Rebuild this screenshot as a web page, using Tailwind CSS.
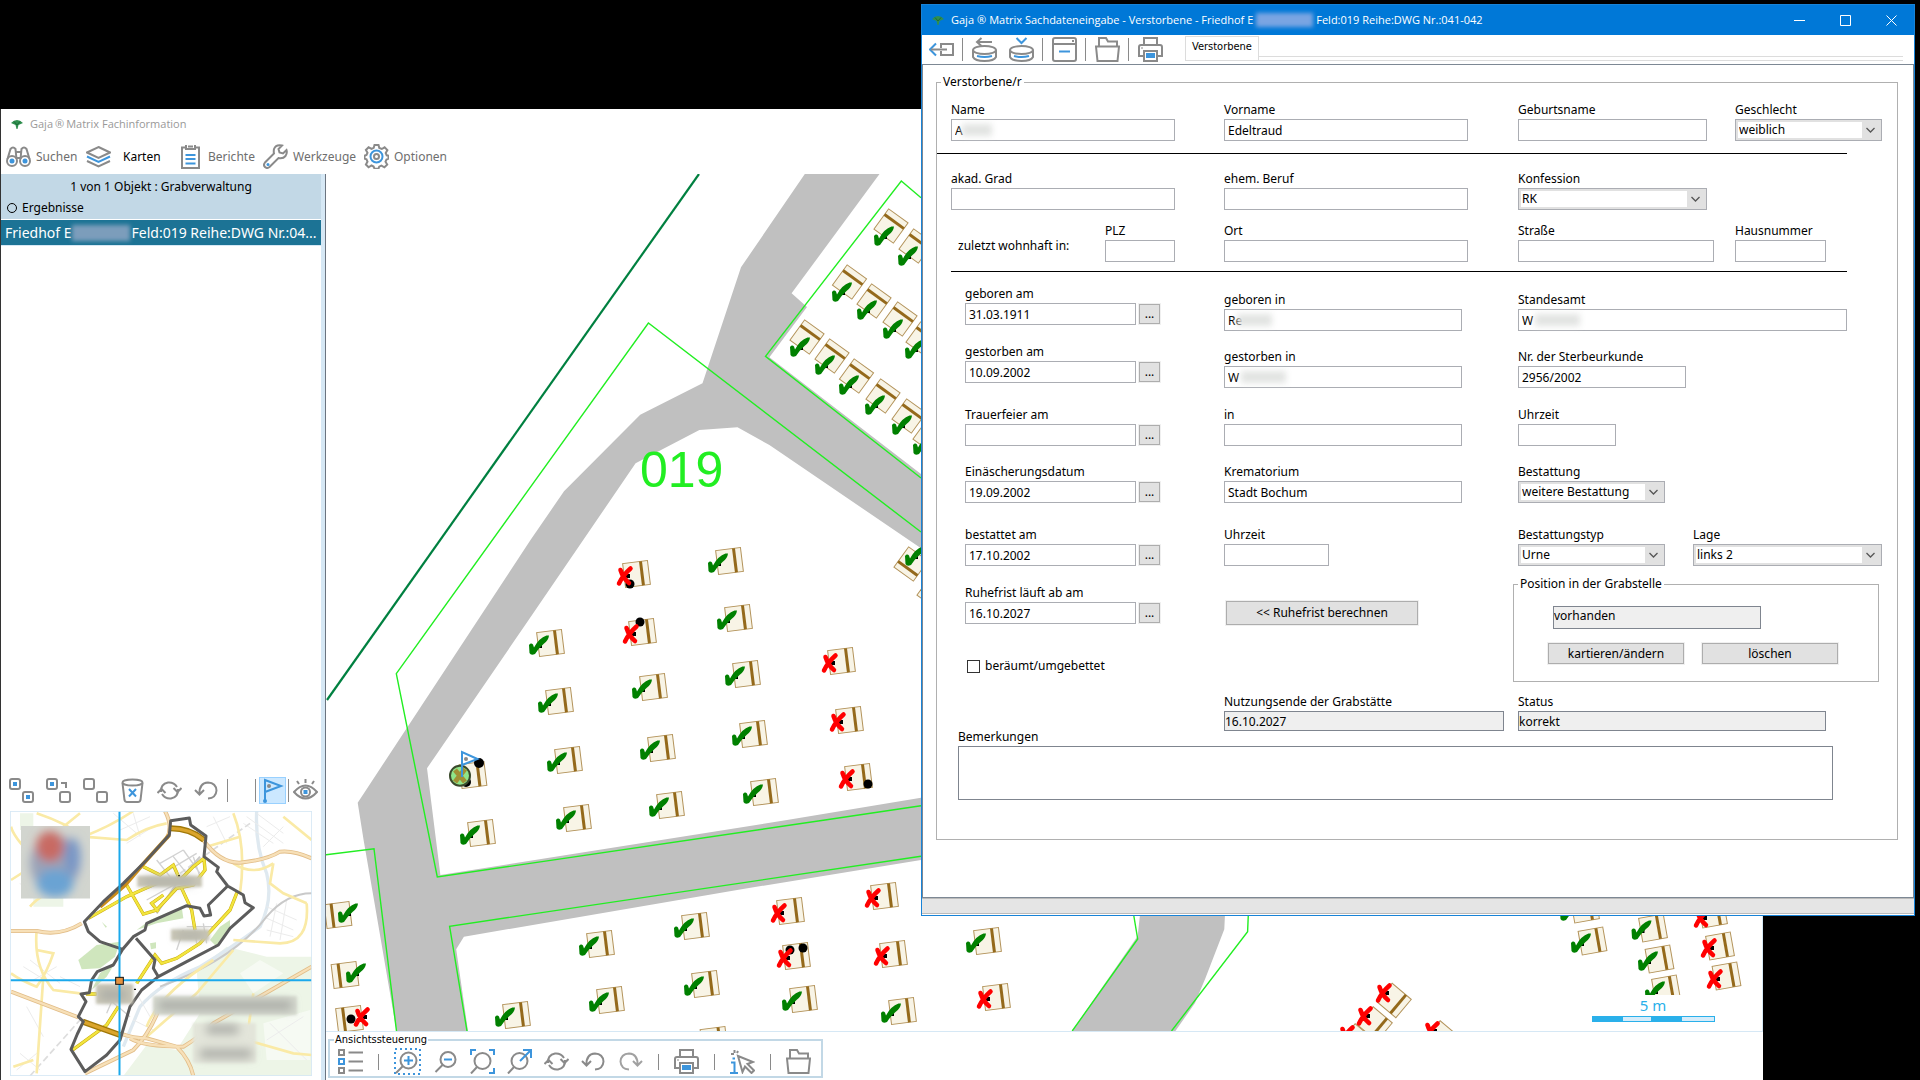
<!DOCTYPE html>
<html lang="de">
<head>
    <meta charset="UTF-8">
    <meta name="viewport" content="width=device-width, initial-scale=1.0">
    <title>Gaja®Matrix Fachinformation</title>
    <script src="https://cdn.jsdelivr.net/npm/@tailwindcss/browser@4"></script>
    <style>
        body {
            font-family: 'Noto Sans', 'Open Sans', sans-serif;
        }
        .i {
            fill: none;
            stroke: #8a8a8a;
            stroke-width: 2;
        }
        .b {
            stroke: #3d95dc;
        }
    </style>
</head>
<body class="bg-black text-black text-xs">

    <!-- Icons -->
    <svg class="hidden">
        <symbol id="logo" viewBox="0 0 12 9"><path d="M0 3 Q6 -3 12 3 L7.500 5 L6.500 9 L5.500 9 L4.500 5 Z" fill="#2f8f4e"/><path d="M3 1.500 L6 5 L9 1.500" stroke="#1d6b3a" fill="none"/></symbol>
        <symbol id="binoculars" viewBox="0 0 25 25"><g class="i"><circle cx="6" cy="17" r="5"/><circle cx="19" cy="17" r="5"/><path d="M1.500 15 L4.500 5 Q7 2 9.500 5 L10.500 15 M23.500 15 L20.500 5 Q18 2 15.500 5 L14.500 15 M10 8 h5 M10.500 14 h4"/></g><circle cx="6" cy="17" r="2.500" fill="#3d95dc"/><circle cx="19" cy="17" r="2.500" fill="#3d95dc"/></symbol>
        <symbol id="layers" viewBox="0 0 25 25"><g class="i"><path d="M12.500 3 L24 8.500 L12.500 14 L1 8.500 Z"/><path class="b" d="M1 12.500 L12.500 18 L24 12.500"/><path d="M1 17 L12.500 22.500 L24 17"/></g></symbol>
        <symbol id="clipboard" viewBox="0 0 25 25"><g class="i"><path d="M7 3.500 H4 V24 H21 V3.500 H18 M8 1 V6 M17 1 V6 M8 5 H17 M10 2.500 H15"/><path class="b" d="M7.500 11 h10 M7.500 15 h10 M7.500 19.500 h10"/></g></symbol>
        <symbol id="wrench" viewBox="0 0 25 25"><path class="i" d="M19 1.500 Q13 0 11 5 Q10.500 7.500 11 9.500 L2 18.500 Q0 21 2 23 Q4 25 6.500 23 L15.500 14 Q20 15 22.500 12 Q24.500 9 23.500 6 L20 9.500 L16.500 8.500 L15.500 5 Z"/><circle cx="5" cy="20.500" r="1.500" fill="#3d95dc"/></symbol>
        <symbol id="gear" viewBox="0 0 25 25"><g class="i"><path d="M10.500 1 h4 l.8 3 2.500 1 2.800-1.700 2.800 2.800L21.700 9l1 2.300 1.800.4v3l-2 .8-1 2.200 1.700 2.900-2.800 2.700-3-1.600-2.200 1-.7 2h-4l-.9-2.200-2.100-1-2.900 1.800-2.700-2.800 1.600-2.900-1-2.200-2-.7v-3l2-.7 1-2.200-1.600-2.800 2.700-2.700 3 1.600 2.100-1z"/><circle class="b" cx="12.500" cy="12.500" r="6"/><circle cx="12.500" cy="12.500" r="2.500"/></g></symbol>
        <symbol id="sel-both" viewBox="0 0 25 25"><g class="i"><rect x="1" y="1" width="10" height="10" rx="2"/><rect x="14" y="14" width="10" height="10" rx="2"/></g><path d="M4 4h4v4h-4z M17 17h4v4h-4z" fill="#3d95dc"/></symbol>
        <symbol id="sel-swap" viewBox="0 0 25 25"><g class="i"><rect x="1" y="1" width="10" height="10" rx="2"/><rect x="14" y="14" width="10" height="10" rx="2"/><path d="M15 5 h5 v5"/></g><path d="M4 4h4v4h-4z" fill="#3d95dc"/></symbol>
        <symbol id="sel-none" viewBox="0 0 25 25"><g class="i"><rect x="1" y="1" width="10" height="10" rx="2"/><rect x="14" y="14" width="10" height="10" rx="2"/></g></symbol>
        <symbol id="trash" viewBox="0 0 25 25"><g class="i"><ellipse cx="12.500" cy="4.500" rx="10" ry="3"/><path d="M2.500 5 L4.500 22 Q5 24 7 24 H18 Q20 24 20.500 22 L22.500 5"/><path class="b" d="M9 11 L16 18.500 M16 11 L9 18.500"/></g></symbol>
        <symbol id="refresh" viewBox="0 0 25 25"><g class="i"><path d="M4 14 Q3.500 6 11 4.500 Q17 4 20 9 M21 11 Q21.500 19 14 20.500 Q8 21 5 16"/><path d="M.5 15 L4.500 11 L8.500 15 M16.500 10 L20.500 14 L24.500 10"/></g></symbol>
        <symbol id="undo" viewBox="0 0 25 25"><path class="i" d="M5.500 16 Q5 5 14 4.500 Q22 5 22.500 12.500 Q22 20 14 20.500 M1 12 L5.500 16.500 L10 12"/></symbol>
        <symbol id="redo" viewBox="0 0 25 25"><path class="i" d="M19.500 16 Q20 5 11 4.500 Q3 5 2.500 12.500 Q3 20 11 20.500 M24 12 L19.500 16.500 L15 12"/></symbol>
        <symbol id="flag" viewBox="0 0 25 25"><g class="i"><path class="b" d="M5 24 V2 L21 8 L5 14"/></g><circle cx="5" cy="23" r="2" fill="#3d95dc"/><circle cx="9" cy="8" r="2" fill="#8a8a8a"/></symbol>
        <symbol id="eye" viewBox="0 0 25 25"><g class="i"><path d="M1 14 Q12.500 1 24 14 Q12.500 27 1 14 Z"/><circle cx="12.500" cy="14" r="4.500"/><path d="M12.500 1 v4 M4 3 l2 3 M21 3 l-2 3"/></g><rect x="10.500" y="12" width="4" height="4" fill="#3d95dc"/></symbol>
        <symbol id="list" viewBox="0 0 25 25"><g class="i"><rect x="1" y="1" width="5" height="5"/><rect class="b" x="1" y="10" width="5" height="5"/><rect x="1" y="19" width="5" height="5"/><path d="M10.500 3.500 H25 M10.500 12.500 H25 M10.500 21.500 H25"/></g></symbol>
        <symbol id="zoom-in" viewBox="0 0 27 27"><g class="i"><path class="b" stroke-dasharray="2 3" d="M1 1 H26 V26 H1 Z"/><circle cx="14.500" cy="12.500" r="8"/><path d="M9 18 L2 25"/><path class="b" d="M10 12.500 h9 M14.500 8 v9"/></g></symbol>
        <symbol id="zoom-out" viewBox="0 0 25 25"><g class="i"><circle cx="15" cy="10.500" r="7.500"/><path d="M9.500 16 L2.500 23"/><path class="b" d="M11 10.500 h8"/></g></symbol>
        <symbol id="zoom-fit" viewBox="0 0 25 25"><g class="i"><circle cx="12.500" cy="12" r="8"/><path d="M7 18 L1 24.500"/><path class="b" d="M1 6 V1 H6 M19 1 H24 V6 M24 19 V24 H19"/></g></symbol>
        <symbol id="zoom-to" viewBox="0 0 25 25"><g class="i"><circle cx="12.500" cy="12" r="8"/><path d="M7 18 L1 24.500"/><path class="b" d="M13 12 L23.500 1.500 M16 1 H24 V9"/></g></symbol>
        <symbol id="printer" viewBox="0 0 25 25"><g class="i"><path d="M6 8 V1 H19 V8 M5 19 H1 V10 Q1 8 3 8 H22 Q24 8 24 10 V19 H20"/><path d="M6 14 H19 V24 H6 Z"/></g><path d="M8 16h9v5h-9z" fill="#3d95dc"/><path d="M3 10.500h2v1h-2z" fill="#8a8a8a"/></symbol>
        <symbol id="info-cursor" viewBox="0 0 25 25"><g class="i"><path d="M8 7 L23 13 L17.500 15 L24 21.500 L21.500 24 L15 17.500 L12.500 23 Z"/><path d="M4.500 1 v3 M1 5 h3 M8 2 L7 4"/><path class="b" d="M1 13.500 h3.500 V24 M0 24 h8 M2.500 9.500 h2.500"/></g></symbol>
        <symbol id="folder" viewBox="0 0 25 25"><g class="i"><path d="M4 9 V1 H11 L13 4.500 H22 V9"/><path d="M1 9.500 H24 L22.500 24 H2.500 Z"/></g></symbol>
        <symbol id="exit" viewBox="0 0 25 25"><g class="i"><path class="b" d="M7 6.500 L1 12.500 L7 18.500"/><path d="M2 12.500 H18 M12 11 V7 H24 V18 H12 V14"/></g></symbol>
        <symbol id="db-back" viewBox="0 0 25 25"><g class="i"><ellipse cx="12.500" cy="13" rx="11.500" ry="4"/><path d="M1 13 V20 Q3 24 12.500 24 Q22 24 24 20 V13 M5 5 H20 M9.500 1 L5 5 L9.500 9"/><path class="b" d="M5 19 Q12.500 21 20 19"/></g></symbol>
        <symbol id="db-down" viewBox="0 0 25 25"><g class="i"><ellipse cx="12.500" cy="13" rx="11.500" ry="4"/><path d="M1 13 V20 Q3 24 12.500 24 Q22 24 24 20 V13"/><path class="b" d="M5 19 Q12.500 21 20 19 M7.500 1 L12.500 6 L17.500 1"/></g></symbol>
        <symbol id="window" viewBox="0 0 25 25"><g class="i"><rect x="1" y="1" width="23" height="23" rx="2"/><path d="M1 7 H24"/><path class="b" d="M7 14.500 h11"/></g><path d="M20 3h2v2h-2z" fill="#8a8a8a"/></symbol>
        <symbol id="chevron" viewBox="0 0 10 10"><path d="M1 3 L5 7 L9 3" fill="none" stroke="#555" stroke-width="1.300"/></symbol>
    </svg>

    <!-- Hauptfenster -->
    <div class="absolute left-0 right-[157px] top-[109px] bottom-0 flex flex-col bg-white border-l border-[#333] overflow-hidden">
        <header class="flex items-center h-[30px] pl-[10px] gap-[7px] text-[11px] text-[#999]" style="font-family: 'Open Sans', sans-serif">
            <svg class="w-3 h-[9px]"><use href="#logo"/></svg>
            <h1>Gaja<span class="mx-0.5">®</span>Matrix Fachinformation</h1>
        </header>
        <nav class="flex items-center h-[35px] pl-[5px] text-[#6e6e6e]">
            <button class="flex items-center gap-[5px] w-20"><svg class="size-[25px]"><use href="#binoculars"/></svg>Suchen</button>
            <button class="flex items-center gap-3 w-[92px] text-black"><svg class="size-[25px]"><use href="#layers"/></svg>Karten</button>
            <button class="flex items-center gap-[5px] w-[85px]"><svg class="size-[25px]"><use href="#clipboard"/></svg>Berichte</button>
            <button class="flex items-center gap-[5px] w-[101px]"><svg class="size-[25px]"><use href="#wrench"/></svg>Werkzeuge</button>
            <button class="flex items-center gap-[5px]"><svg class="size-[25px]"><use href="#gear"/></svg>Optionen</button>
        </nav>

        <div class="flex flex-1 min-h-0">
            <aside class="flex flex-col w-80 shrink-0">
                <div class="bg-[#c2d8e6] h-[45px] pt-1">
                    <h2 class="text-center leading-[18px]">1 von 1 Objekt : Grabverwaltung</h2>
                    <label class="flex items-center gap-[5px] pl-1.5 mt-[3px] leading-[18px]"><input type="radio" name="liste" class="appearance-none size-[10px] rounded-full border border-black">Ergebnisse</label>
                </div>
                <a href="#" class="flex items-center h-[25px] mt-px pl-1 bg-[#1c7395] text-white text-sm whitespace-nowrap overflow-hidden">Friedhof E<span class="w-[58px] h-4 mr-0.5 shrink-0 bg-[#7c9dbb] blur-[2px]"></span>Feld:019 Reihe:DWG Nr.:04...</a>
                <div class="flex-1 border-t border-[#d6e8f5]"></div>
                <div class="flex items-center h-[34px] pl-2 text-[#8a8a8a]">
                    <div class="flex items-center gap-3">
                        <button aria-label="Alle auswählen"><svg class="block size-[25px]"><use href="#sel-both"/></svg></button>
                        <button aria-label="Auswahl umkehren"><svg class="block size-[25px]"><use href="#sel-swap"/></svg></button>
                        <button aria-label="Auswahl aufheben"><svg class="block size-[25px]"><use href="#sel-none"/></svg></button>
                        <button aria-label="Löschen"><svg class="block size-[25px]"><use href="#trash"/></svg></button>
                        <button aria-label="Aktualisieren"><svg class="block size-[25px]"><use href="#refresh"/></svg></button>
                        <button aria-label="Zurück"><svg class="block size-[25px]"><use href="#undo"/></svg></button>
                    </div>
                    <span class="w-px h-[23px] bg-[#8a8a8a] ml-2"></span>
                    <span class="w-px h-[23px] bg-[#8a8a8a] ml-[27px]"></span>
                    <button aria-label="Markierung" class="ml-[3px] bg-[#cce8ff] border border-[#99d1ff]"><svg class="block size-[25px]"><use href="#flag"/></svg></button>
                    <span class="w-px h-[23px] bg-[#8a8a8a] mx-[2px]"></span>
                    <button aria-label="Anzeigen" class="ml-0.5"><svg class="block size-[25px]"><use href="#eye"/></svg></button>
                </div>
                <!-- Übersichtskarte -->
                <svg class="w-[302px] h-[265px] ml-[9px] mt-1 mb-1" viewBox="30 153 906 795">
                    <defs>
                        <filter id="soft" x="-40%" y="-40%" width="180%" height="180%"><feGaussianBlur stdDeviation="14"/></filter>
                        <filter id="kante" x="-10%" y="-20%" width="120%" height="140%"><feGaussianBlur stdDeviation="4"/></filter>
                        <clipPath id="wappen"><rect x="63" y="198" width="207" height="218"/></clipPath>
                    </defs>
                    <rect x="30" y="153" width="906" height="795" fill="#fff"/>
                    <g fill="#edf5e7">
                        <path d="M590 630 L680 560 L800 590 L935 590 V948 H370 L440 855 L530 870 L600 760 Z"/>
                        <path d="M60 160 h40 v50 h-40z M100 400 h90 v40 h-90z"/>
                    </g>
                    <path d="M790 790 L930 750 V900 H800 Z M720 640 L780 600 L850 640 L760 700 Z" fill="#fff" opacity=".5"/>
                    <g fill="#cfe6bd">
                        <path d="M235 600 L290 555 L360 545 L345 590 L300 625 L245 628 Z"/>
                        <path d="M410 510 L450 480 L545 440 L550 475 L470 490 Z M275 690 L300 640 L350 600 L320 650 Z M630 540 L660 500 L690 480 L690 505 L650 560 Z M450 550 l18 -3 v18 l-15 3z M305 485 l12 18 4 -3z"/>
                    </g>
                    <g fill="none" stroke="#dfe9f0" stroke-width="10">
                        <path d="M770 153 Q765 260 800 340 Q820 420 780 500 Q700 560 600 620 Q480 670 420 740 L370 860"/>
                    </g>
                    <g fill="none" stroke="#ececec" stroke-width="3">
                        <path d="M340 160 l70 60 M360 210 l90 -40 M380 250 l80 -50 M400 160 l20 70 M640 170 l40 80 M620 200 l70 -30 M730 190 l90 60 M740 170 l110 80 M770 160 l80 60 M790 260 l60 -60 M60 370 l40 40 M180 650 l60 30 M70 620 l80 50 M90 600 l90 70 M100 660 l70 -40 M80 740 l50 90 M800 440 l90 40 M790 470 l90 40 M800 510 l80 20 M830 430 l-20 100 M860 420 l-20 120 M60 880 l60 50 M50 930 l60 -50 M810 790 l110 110 M800 840 l110 -70 M400 780 l60 30 M410 700 l40 70"/>
                        <path d="M90 948 L240 780 M540 340 L750 190" stroke-dasharray="20 10" stroke="#ddd" stroke-width="5"/>
                    </g>
                    <g fill="none" stroke="#d2d2d2" stroke-width="4">
                        <path d="M480 310 l70 -40 M490 340 l100 -60 M520 290 l40 50 M550 270 l50 70 M470 300 l40 50 M580 290 l20 60 M430 390 l80 -30 M440 420 l90 -50 M560 500 l80 0 M570 530 l60 -10 M580 480 l10 70 M610 490 l10 60 M550 510 l-20 60 M330 720 l60 50 M350 690 l-30 70"/>
                        <path d="M470 460 L530 370 L600 290 M935 400 Q860 400 800 470 Q700 600 480 680" stroke="#c9c9c9" stroke-width="6"/>
                    </g>
                    <g fill="none" stroke="#faeaa6" stroke-width="8">
                        <path d="M110 160 Q200 190 250 230 L380 240 Q440 200 500 190"/>
                        <path d="M190 200 L240 160 M250 230 Q330 200 400 153 M33 360 L80 330 L90 280 Q40 230 33 200 M90 440 Q120 400 240 360 M110 510 Q100 620 160 690 L240 700 M110 570 L160 580 Q140 640 110 680 Q60 660 33 640 M130 650 Q120 800 110 940 M40 920 L100 900 M700 160 Q740 260 720 400 M620 260 L720 230 M820 310 L810 370 L850 400 L920 430 M920 430 Q930 550 840 550 L700 540 M640 600 Q480 700 440 800 M440 830 L590 700 L700 570 M760 700 L740 840 L880 880 L935 885 M820 310 Q760 350 700 310 M935 240 L850 170"/>
                    </g>
                    <g fill="none" stroke="#e2bd88" stroke-width="12">
                        <path id="autobahn" d="M33 513 L110 513 Q180 530 245 490 M495 153 Q520 200 500 235 M610 240 Q660 310 720 308 Q800 300 840 275 Q880 270 935 295 M33 695 L235 772 M360 820 Q400 835 440 835 L530 860 Q570 900 580 948 M390 835 Q430 860 550 860 Q600 830 640 790 L935 620 M480 740 Q450 820 400 870 L255 940"/>
                        <use href="#autobahn" stroke="#f7e0b8" stroke-width="7"/>
                    </g>
                    <g fill="none" stroke="#c9a90a" stroke-width="10">
                        <path id="strassen" d="M265 475 L380 410 L470 370 M430 320 L480 345 L520 315 L540 360 L580 320 L612 295 L615 330 L580 375 L530 385 L470 450 L430 462 L380 375 M490 405 L455 430 L475 455 M545 385 L575 450 L585 510 M712 395 L690 450 L625 520 L600 550 L530 595 L485 610 L465 585 L410 670 M258 702 H290 M355 740 L320 795 L215 872"/>
                        <path d="M265 475 L380 410 L470 370 M430 320 L480 345 L520 315 L540 360 L580 320 L612 295 L615 330 L580 375 L530 385 L470 450 L430 462 L380 375 M490 405 L455 430 L475 455 M545 385 L575 450 L585 510 M712 395 L690 450 L625 520 L600 550 L530 595 L485 610 L465 585 L410 670 M258 702 H290 M355 740 L320 795 L215 872" stroke="#f2e53e" stroke-width="7"/>
                        <path d="M512 205 Q570 205 612 240 M248 785 L360 825" stroke="#a07808" stroke-width="18"/>
                        <path d="M512 205 Q570 205 612 240 M248 785 L360 825" stroke="#dba52c" stroke-width="10"/>
                        <path d="M508 225 L440 300 L375 375 L300 440" stroke="#c98b1a" stroke-width="12"/>
                    </g>
                    <g fill="none" stroke="#5c5c5c" stroke-width="9" stroke-linejoin="round">
                        <path d="M512 182 L568 174 L572 195 L618 228 L612 290 L655 322 L650 335 L683 378 L730 405 L735 428 L760 443 L690 505 L655 555 L560 605 L475 650 L425 690 L390 740 L360 840 L320 885 L255 935 L213 868 L232 822 L250 785 L235 770 L258 725 L243 702 L268 698 L275 660 L292 635 L340 615 L368 568 L300 545 L265 515 L253 485 L310 425 L370 370 L440 300 L508 225 Z"/>
                        <path d="M683 378 L625 435 L632 465 L612 468 L600 445 L560 437 L440 490 L435 510 L400 530 L368 568 M408 535 L465 600 L460 625 L475 650"/>
                    </g>
                    <g clip-path="url(#wappen)">
                        <rect x="63" y="198" width="207" height="218" fill="#d2d5cf"/>
                        <g filter="url(#soft)">
                            <ellipse cx="165" cy="310" rx="75" ry="85" fill="#9aa3b8"/>
                            <ellipse cx="150" cy="260" rx="42" ry="46" fill="#c86a64"/>
                            <ellipse cx="218" cy="290" rx="24" ry="55" fill="#7896c6"/>
                            <ellipse cx="165" cy="370" rx="55" ry="42" fill="#6ba3d3"/>
                        </g>
                    </g>
                    <g filter="url(#kante)" fill="#c9c6b6">
                        <path d="M412 347h194v34h-194z M513 508h115v34h-115z M288 672h112v60h-112z"/>
                        <path d="M459 708h432v57h-432z" fill="#d5d9cf"/>
                        <path d="M579 789h189v120h-189z" fill="#e3e5da"/>
                    </g>
                    <g filter="url(#soft)" fill="#a9aaa5"><rect x="475" y="722" width="400" height="28"/><rect x="620" y="795" width="95" height="26"/><rect x="600" y="868" width="155" height="26"/><rect x="430" y="355" width="150" height="18"/><rect x="530" y="518" width="80" height="16"/><rect x="300" y="690" width="80" height="28"/></g>
                    <path d="M535 345h4v4h-4z M402 686h6v4h-6z" fill="#000"/>
                    <path d="M358.500 153 V948 M30 661 H936" stroke="#1ba9ec" stroke-width="6"/>
                    <rect x="347" y="652" width="23" height="21" fill="#e59240" stroke="#111" stroke-width="3"/>
                    <rect x="31" y="154" width="904" height="793" fill="none" stroke="#d6e8f5" stroke-width="3"/>
                </svg>
            </aside>
            <div class="w-1 bg-[#d6e8f5] border-r border-[#6b7480] shrink-0 box-content"></div>

            <main class="flex flex-col flex-1 min-w-0">
                <!-- Lageplan -->
                <svg id="plan" class="block w-full flex-1 min-h-0 border-b border-r border-[#d6e8f5] overflow-hidden">
                    <defs>
                        <g id="grab">
                            <rect x="-12.500" y="-12" width="25" height="24" fill="#f8f4e6" stroke="#b3935a"/>
                            <rect x="4" y="-12" width="3" height="24" fill="#94691b"/>
                        </g>
                        <g id="ok">
                            <rect x="-2" y="-2" width="5" height="5" fill="#000"/>
                            <path d="M-10 0 Q-8 -2.500 -6 -.5 L-5 2.500 Q0 -7 7.500 -9.500 L10 -9.500 Q9.500 -4.500 4.500 -1 Q-1 4 -4 9 Q-8 11 -9.500 8 Z" fill="#008000"/>
                        </g>
                        <g id="nein">
                            <rect x="1" y="-2" width="4" height="4" fill="#000"/>
                            <path d="M-4.500 -6 Q-2 2 4 7 M5.500 -7.500 Q-2 -1 -6 7.500" fill="none" stroke="#f00" stroke-width="4.500" stroke-linecap="round"/>
                        </g>
                    </defs>
                    <g transform="translate(-326 -174)">
                        <path fill="#c0c0c0" d="M804.800 174 H879.500 L791.600 293.300 L807 307 L769.400 357.300 L921 474 V548.300 L769.400 445 L737.500 427.300 L699.400 430 L635.600 463.300 L528.600 620 L427 768.300 L436 840 L440.400 875 L787 820 L921 797.700 V860 L743 889 L463.900 936.700 L456.200 949.300 L468 1031 H396.500 L374 900 L363.600 840 L357.700 802.700 L530.500 540 L564 491.300 L640.200 414.700 L702.500 383.300 L741 267.300 Z"/>
                        <path fill="#c0c0c0" d="M1141 905 H1225.400 L1224.300 929.300 L1205.400 978.300 L1195 1003 L1175.400 1031 H1072 L1137.700 936 Z"/>
                        <path fill="none" stroke="#008040" stroke-width="2.200" d="M699 174 L327 700"/>
                        <g fill="none" stroke="#22ee22" stroke-width="1.400">
                            <path d="M921 532 L648.400 323 L396.300 673.700 L437.300 877 L825 820 L921 805.700"/>
                            <path d="M921 197.700 L901.300 181 L765.500 356.300 L921 478"/>
                            <path d="M326 854.700 L374 848.700 L396.500 1031 M921 856.300 L449.600 926.300 L467 1031"/>
                            <path d="M1132 905 L1137.700 939 L1072.200 1031 M1248.700 905 L1247.600 931.700 L1171.500 1031"/>
                        </g>
                        <text x="640" y="487" fill="#22ee22" font-size="50" font-family="Liberation Sans, sans-serif">019</text>
                        <g id="graeber"></g>
                        <circle cx="479" cy="763" r="5"/>
                        <circle cx="466" cy="782" r="5"/>
                        <circle cx="460" cy="775.700" r="10" fill="#8fe58a" stroke="#3b4a2c" stroke-width="2"/>
                        <path d="M455 770 L465 782 M465 769 L455 782" stroke="#a09035" stroke-width="5"/>
                        <path d="M462 777 V752 L477.500 759 L462 765" fill="#fff" fill-opacity=".6" stroke="#3d95dc" stroke-width="2"/>
                        <circle cx="466" cy="759" r="2" fill="#8a8a8a"/>
                        <rect x="1592" y="1016" width="123" height="6" fill="#2ab0ea"/>
                        <path d="M1623 1017h28v4h-28z M1682 1017h32v4h-32z" fill="#d6ecfa"/>
                        <text x="1653" y="1011" text-anchor="middle" fill="#2ab0ea" font-size="15">5 m</text>
                    </g>
                </svg>
                <div class="px-0.5 pb-0.5">
                    <fieldset class="w-[495px] h-[46px] border-2 border-[#c2d8e6]">
                        <legend class="ml-1 px-[1px] text-[11px] leading-[16px]" style="font-family: 'DejaVu Sans Condensed', sans-serif">Ansichtssteuerung</legend>
                        <div class="flex items-center gap-3 pl-2 h-[27px]">
                            <button aria-label="Legende"><svg class="block size-[25px]"><use href="#list"/></svg></button>
                            <span class="w-px h-4 bg-[#8a8a8a] mx-[3px]"></span>
                            <button aria-label="Vergrößern"><svg class="block size-[27px]"><use href="#zoom-in"/></svg></button>
                            <button aria-label="Verkleinern"><svg class="block size-[25px]"><use href="#zoom-out"/></svg></button>
                            <button aria-label="Alles zeigen"><svg class="block size-[25px]"><use href="#zoom-fit"/></svg></button>
                            <button aria-label="Auf Auswahl zoomen"><svg class="block size-[25px]"><use href="#zoom-to"/></svg></button>
                            <button aria-label="Neu laden"><svg class="block size-[25px]"><use href="#refresh"/></svg></button>
                            <button aria-label="Zurück"><svg class="block size-[25px]"><use href="#undo"/></svg></button>
                            <button aria-label="Vor"><svg class="block size-[25px] opacity-80"><use href="#redo"/></svg></button>
                            <span class="w-px h-4 bg-[#8a8a8a] mx-[3px]"></span>
                            <button aria-label="Drucken"><svg class="block size-[25px]"><use href="#printer"/></svg></button>
                            <span class="w-px h-4 bg-[#8a8a8a] mx-[3px]"></span>
                            <button aria-label="Info"><svg class="block size-[25px]"><use href="#info-cursor"/></svg></button>
                            <span class="w-px h-4 bg-[#8a8a8a] mx-[3px]"></span>
                            <button aria-label="Öffnen"><svg class="block size-[25px]"><use href="#folder"/></svg></button>
                        </div>
                    </fieldset>
                </div>
            </main>
        </div>
    </div>

    <!-- Sachdateneingabe -->
    <div class="absolute left-[921px] right-[5px] top-1 bg-white border border-[#1883d7]">
        <header class="flex items-center h-[30px] pl-[10px] bg-[#0078d7] text-white text-[11px] whitespace-nowrap" style="font-family: 'Open Sans', sans-serif">
            <svg class="w-3 h-[9px] mr-[7px]"><use href="#logo"/></svg>
            <h2 class="flex items-center flex-1">Gaja<span class="mx-[3px]">®</span>Matrix Sachdateneingabe - Verstorbene - Friedhof E<span class="w-[57px] h-3.5 mx-[3px] bg-[#7aa5e2] blur-[2px]"></span>Feld:019 Reihe:DWG Nr.:041-042</h2>
            <button aria-label="Minimieren" class="grid place-items-center w-[46px] h-full"><svg class="size-[11px]" fill="none" stroke="#fff"><path d="M0 5.500 H11"/></svg></button>
            <button aria-label="Maximieren" class="grid place-items-center w-[46px] h-full"><svg class="size-[11px]" fill="none" stroke="#fff"><path d="M.5 .5 H10.500 V10.500 H.5 Z"/></svg></button>
            <button aria-label="Schließen" class="grid place-items-center w-[46px] h-full"><svg class="size-[11px]" fill="none" stroke="#fff"><path d="M.5 .5 L10.500 10.500 M10.500 .5 L.5 10.500"/></svg></button>
        </header>
        <div class="flex items-center h-[30px] pl-[7px] pr-[11px] border-b border-[#7d8894]">
            <div class="flex items-center gap-2">
                <button aria-label="Schließen"><svg class="block size-[25px]"><use href="#exit"/></svg></button>
                <span class="w-px h-[23px] bg-[#8a8a8a] mr-px"></span>
                <button aria-label="Zurücksetzen"><svg class="block size-[25px]"><use href="#db-back"/></svg></button>
                <button aria-label="Speichern" class="ml-1"><svg class="block size-[25px]"><use href="#db-down"/></svg></button>
                <span class="w-px h-[23px] bg-[#8a8a8a] mr-px"></span>
                <button aria-label="Fenster"><svg class="block size-[25px]"><use href="#window"/></svg></button>
                <span class="w-px h-[23px] bg-[#8a8a8a] mr-px"></span>
                <button aria-label="Öffnen"><svg class="block size-[25px]"><use href="#folder"/></svg></button>
                <span class="w-px h-[23px] bg-[#8a8a8a] mr-px"></span>
                <button aria-label="Drucken"><svg class="block size-[25px]"><use href="#printer"/></svg></button>
            </div>
            <div class="flex flex-1 self-start items-start h-[25px] mt-px ml-[22px] border-l border-b border-[#dcdcdc]">
                <button class="h-full px-[6px] pb-0.5 border-t border-r border-[#dcdcdc] text-[11px]" style="font-family: 'DejaVu Sans Condensed', sans-serif">Verstorbene</button>
                <div class="flex-1 h-[21px] border-b border-[#dcdcdc]"></div>
            </div>
        </div>

        <form class="border-x border-b border-[#7d8894] pt-[8px] pl-[13px] pr-[15px] pb-[57px]">
            <fieldset class="border border-[#b0b0b0] pb-[39px] pt-[10px]">
                <legend class="ml-1 px-[2px] leading-[18px]">Verstorbene/r</legend>

                <div class="grid grid-cols-[273fr_294fr_217fr_147fr] pl-[14px] pr-[15px]">
                    <div class="relative"><label for="name" class="block leading-[18px]">Name</label><input id="name" value="A" class="block w-[224px] h-[22px] px-[3px] border border-[#abadb3]"><span class="absolute left-[11px] top-[23px] w-[30px] h-3 bg-[#e2e4e2] blur-[3px]"></span></div>
                    <div><label for="vorname" class="block leading-[18px]">Vorname</label><input id="vorname" value="Edeltraud" class="block w-[244px] h-[22px] px-[3px] border border-[#abadb3]"></div>
                    <div><label for="gebname" class="block leading-[18px]">Geburtsname</label><input id="gebname" class="block w-[189px] h-[22px] px-[3px] border border-[#abadb3]"></div>
                    <div><label for="geschlecht" class="block leading-[18px]">Geschlecht</label><div class="flex items-center h-[22px] p-0.5 border border-[#abadb3] bg-[#e1e1e1]"><select id="geschlecht" class="appearance-none flex-1 h-4 px-px leading-[16px] bg-white"><option>weiblich</option></select><svg class="w-[17px] h-2.5"><use href="#chevron"/></svg></div></div>
                </div>
                <hr class="mt-3 mr-[50px] border-black">

                <div class="grid grid-cols-[273fr_294fr_217fr_147fr] pl-[14px] pr-[15px] mt-4">
                    <div><label for="grad" class="block leading-[18px]">akad. Grad</label><input id="grad" class="block w-[224px] h-[22px] px-[3px] border border-[#abadb3]"></div>
                    <div><label for="beruf" class="block leading-[18px]">ehem. Beruf</label><input id="beruf" class="block w-[244px] h-[22px] px-[3px] border border-[#abadb3]"></div>
                    <div><label for="konfession" class="block leading-[18px]">Konfession</label><div class="flex items-center w-[189px] h-[22px] p-0.5 border border-[#abadb3] bg-[#e1e1e1]"><select id="konfession" class="appearance-none flex-1 h-4 px-px leading-[16px] bg-white"><option>RK</option></select><svg class="w-[17px] h-2.5"><use href="#chevron"/></svg></div></div>
                </div>
                <div class="grid grid-cols-[273fr_294fr_217fr_147fr] pl-[14px] pr-[15px] mt-3">
                    <div class="flex justify-between items-center w-[224px] pl-[7px]"><span class="mt-2">zuletzt wohnhaft in:</span><div class="w-[70px]"><label for="plz" class="block leading-[18px]">PLZ</label><input id="plz" class="block w-full h-[22px] px-[3px] border border-[#abadb3]"></div></div>
                    <div><label for="ort" class="block leading-[18px]">Ort</label><input id="ort" class="block w-[244px] h-[22px] px-[3px] border border-[#abadb3]"></div>
                    <div><label for="strasse" class="block leading-[18px]">Straße</label><input id="strasse" class="block w-[196px] h-[22px] px-[3px] border border-[#abadb3]"></div>
                    <div><label for="hausnr" class="block leading-[18px]">Hausnummer</label><input id="hausnr" class="block w-[91px] h-[22px] px-[3px] border border-[#abadb3]"></div>
                </div>
                <hr class="mt-[9px] ml-[14px] mr-[50px] border-black">

                <div class="grid grid-cols-[273fr_294fr_364fr] pl-[14px] pr-[15px] pt-[13px]">
                    <div class="pl-[14px]">
                        <label for="geboren" class="block leading-[18px]">geboren am</label>
                        <div class="flex items-center gap-[3px] h-[22px]"><input id="geboren" value="31.03.1911" class="w-[171px] h-[22px] px-[3px] border border-[#abadb3]"><button type="button" class="w-[21px] h-5 border border-[#adadad] bg-[#e1e1e1] outline outline-[#f0f0f0]">...</button></div>
                        <label for="gestorben" class="block leading-[18px] mt-[18px]">gestorben am</label>
                        <div class="flex items-center gap-[3px] h-[22px]"><input id="gestorben" value="10.09.2002" class="w-[171px] h-[22px] px-[3px] border border-[#abadb3]"><button type="button" class="w-[21px] h-5 border border-[#adadad] bg-[#e1e1e1] outline outline-[#f0f0f0]">...</button></div>
                        <label for="trauerfeier" class="block leading-[18px] mt-[23px]">Trauerfeier am</label>
                        <div class="flex items-center gap-[3px] h-[22px]"><input id="trauerfeier" class="w-[171px] h-[22px] px-[3px] border border-[#abadb3]"><button type="button" class="w-[21px] h-5 border border-[#adadad] bg-[#e1e1e1] outline outline-[#f0f0f0]">...</button></div>
                        <label for="einaescherung" class="block leading-[18px] mt-[17px]">Einäscherungsdatum</label>
                        <div class="flex items-center gap-[3px] h-[22px]"><input id="einaescherung" value="19.09.2002" class="w-[171px] h-[22px] px-[3px] border border-[#abadb3]"><button type="button" class="w-[21px] h-5 border border-[#adadad] bg-[#e1e1e1] outline outline-[#f0f0f0]">...</button></div>
                        <label for="bestattet" class="block leading-[18px] mt-[23px]">bestattet am</label>
                        <div class="flex items-center gap-[3px] h-[22px]"><input id="bestattet" value="17.10.2002" class="w-[171px] h-[22px] px-[3px] border border-[#abadb3]"><button type="button" class="w-[21px] h-5 border border-[#adadad] bg-[#e1e1e1] outline outline-[#f0f0f0]">...</button></div>
                        <label for="ruhefrist" class="block leading-[18px] mt-[18px]">Ruhefrist läuft ab am</label>
                        <div class="flex items-center gap-[3px] h-[22px]"><input id="ruhefrist" value="16.10.2027" class="w-[171px] h-[22px] px-[3px] border border-[#abadb3]"><button type="button" class="w-[21px] h-5 border border-[#adadad] bg-[#e1e1e1] outline outline-[#f0f0f0]">...</button></div>
                        <label class="flex items-center gap-[5px] leading-[18px] mt-[33px] pl-0.5"><input type="checkbox" class="appearance-none size-[13px] border border-[#333] bg-white">beräumt/umgebettet</label>
                    </div>

                    <div class="pt-1.5">
                        <div class="relative"><label for="gebin" class="block leading-[18px]">geboren in</label><input id="gebin" value="Re" class="block w-[238px] h-[22px] px-[3px] border border-[#abadb3]"><span class="absolute left-[13px] top-[23px] w-[35px] h-3 bg-[#e2e4e2] blur-[3px]"></span></div>
                        <div class="relative mt-[17px]"><label for="gestin" class="block leading-[18px]">gestorben in</label><input id="gestin" value="W" class="block w-[238px] h-[22px] px-[3px] border border-[#abadb3]"><span class="absolute left-[17px] top-[23px] w-[45px] h-3 bg-[#e2e4e2] blur-[3px]"></span></div>
                        <label for="feierin" class="block leading-[18px] mt-[18px]">in</label><input id="feierin" class="block w-[238px] h-[22px] px-[3px] border border-[#abadb3]">
                        <label for="krematorium" class="block leading-[18px] mt-[17px]">Krematorium</label><input id="krematorium" value="Stadt Bochum" class="block w-[238px] h-[22px] px-[3px] border border-[#abadb3]">
                        <label for="uhrzeit2" class="block leading-[18px] mt-[23px]">Uhrzeit</label><input id="uhrzeit2" class="block w-[105px] h-[22px] px-[3px] border border-[#abadb3]">
                        <button type="button" class="block w-[192px] h-6 mt-[35px] ml-0.5 border border-[#adadad] bg-[#e1e1e1] outline outline-[#f0f0f0]">&lt;&lt; Ruhefrist berechnen</button>
                    </div>

                    <div class="pt-1.5">
                        <div class="relative"><label for="standesamt" class="block leading-[18px]">Standesamt</label><input id="standesamt" value="W" class="block w-[329px] h-[22px] px-[3px] border border-[#abadb3]"><span class="absolute left-[17px] top-[23px] w-[45px] h-3 bg-[#e2e4e2] blur-[3px]"></span></div>
                        <label for="urkunde" class="block leading-[18px] mt-[17px]">Nr. der Sterbeurkunde</label><input id="urkunde" value="2956/2002" class="block w-[168px] h-[22px] px-[3px] border border-[#abadb3]">
                        <label for="uhrzeit" class="block leading-[18px] mt-[18px]">Uhrzeit</label><input id="uhrzeit" class="block w-[98px] h-[22px] px-[3px] border border-[#abadb3]">
                        <label for="bestattung" class="block leading-[18px] mt-[17px]">Bestattung</label>
                        <div class="flex items-center w-[147px] h-[22px] p-0.5 border border-[#abadb3] bg-[#e1e1e1]"><select id="bestattung" class="appearance-none flex-1 h-4 px-px leading-[16px] bg-white"><option>weitere Bestattung</option></select><svg class="w-[17px] h-2.5"><use href="#chevron"/></svg></div>
                        <div class="flex gap-7 mt-[23px]">
                            <div><label for="typ" class="block leading-[18px]">Bestattungstyp</label><div class="flex items-center w-[147px] h-[22px] p-0.5 border border-[#abadb3] bg-[#e1e1e1]"><select id="typ" class="appearance-none flex-1 h-4 px-px leading-[16px] bg-white"><option>Urne</option></select><svg class="w-[17px] h-2.5"><use href="#chevron"/></svg></div></div>
                            <div class="flex-1"><label for="lage" class="block leading-[18px]">Lage</label><div class="flex items-center h-[22px] p-0.5 border border-[#abadb3] bg-[#e1e1e1]"><select id="lage" class="appearance-none flex-1 h-4 px-px leading-[16px] bg-white"><option>links 2</option></select><svg class="w-[17px] h-2.5"><use href="#chevron"/></svg></div></div>
                        </div>
                        <fieldset class="h-[107px] mt-[9px] -ml-[5px] mr-[3px] pt-[13px] border border-[#b0b0b0]">
                            <legend class="ml-1 px-[2px] leading-[18px]">Position in der Grabstelle</legend>
                            <input aria-label="Position in der Grabstelle" readonly value="vorhanden" class="block w-[208px] h-[23px] ml-[39px] pb-1 border border-[#7f858f] bg-[#efefef]">
                            <div class="flex gap-[18px] mt-[14px] ml-[34px]">
                                <button type="button" class="w-[136px] h-[21px] border border-[#adadad] bg-[#e1e1e1] outline outline-[#f0f0f0]">kartieren/ändern</button>
                                <button type="button" class="w-[136px] h-[21px] border border-[#adadad] bg-[#e1e1e1] outline outline-[#f0f0f0]">löschen</button>
                            </div>
                        </fieldset>
                    </div>
                </div>

                <div class="grid grid-cols-[273fr_294fr_364fr] h-[53px] pl-[14px] pr-[15px] mt-[11px]">
                    <label for="bemerkungen" class="self-end pl-[7px] leading-[18px]">Bemerkungen</label>
                    <div><label for="ende" class="block leading-[18px]">Nutzungsende der Grabstätte</label><input id="ende" readonly value="16.10.2027" class="block w-[280px] h-5 border border-[#7f858f] bg-[#efefef]"></div>
                    <div><label for="status" class="block leading-[18px]">Status</label><input id="status" readonly value="korrekt" class="block w-[308px] h-5 border border-[#7f858f] bg-[#efefef]"></div>
                </div>
                <div class="pl-[21px] pr-16"><textarea id="bemerkungen" class="block w-full h-[54px] resize-none border border-[#7f858f]"></textarea></div>
            </fieldset>
        </form>
        <footer class="h-4 bg-[#e5e5e5] border-t border-b border-[#bbb] mb-px"></footer>
    </div>

    <script>
        // Grabstellen: [x, y, Drehung, Symbol, Symbol-x, Symbol-y]
        const graeber = [
            [891, 226, -54, 'ok', 884, 236], [916, 246, -54, 'ok', 908, 256],
            [849.5, 282, -54, 'ok', 842, 292], [874, 301, -54, 'ok', 867, 310], [900, 319, -54, 'ok', 893, 329], [923, 339, -54, 'ok', 915, 349],
            [807, 337, -54, 'ok', 800, 347], [832, 356, -54, 'ok', 825, 365], [856.5, 376, -54, 'ok', 849, 385], [883, 396, -54, 'ok', 875, 405], [909, 416, -54, 'ok', 902, 425], [930, 436, -54, 'ok', 923, 445],
            [911, 564, 126, 'ok', 915, 556], [934, 592, 126, null, 0, 0],
            [714, 1040, -7, null, 0, 0],
            [338, 915, 173, 'ok', 348, 913], [345, 975, 173, 'ok', 356, 973], [349.5, 1019, 173, 'nein', 362, 1017],
            [1592.5, 941, -10, 'ok', 1581, 943], [1585, 909, -10, 'ok', 1570, 911],
            [1653, 928, -10, 'ok', 1641.5, 930], [1659.5, 959, -10, 'ok', 1648, 961],
            [1713, 914, -10, 'nein', 1702, 918], [1720, 946, -10, 'nein', 1709, 948], [1726.5, 976, -10, 'nein', 1715, 979],
            [1394, 1000.5, 40, 'nein', 1384, 993], [1375, 1024, 40, 'nein', 1365, 1016],
            [1357, 1041, 40, 'nein', 1347, 1035], [1442, 1038, 40, 'nein', 1432, 1031]
        ];
        // Reihen mit gleicher Ausrichtung: nur die Lage des Symbols
        const belegt = [
            [718, 563], [727, 620], [539, 645], [548, 703], [642, 689], [735, 676], [557, 762], [650, 750], [742, 736],
            [566, 820], [659, 807], [753, 794], [470, 835], [589, 946], [684, 928], [599, 1002], [694, 986],
            [505, 1017], [792, 1001], [891, 1013], [976, 943]
        ];
        const frei = [
            [625, 576], [631, 634], [830, 663], [838, 722], [847, 779], [779, 913], [873, 898], [785, 958], [882, 956], [985, 999]
        ];
        const punkte = [[630, 584], [640, 622], [868, 784], [790, 950], [803, 948], [351, 1019]];

        belegt.forEach(([x, y]) => graeber.push([x + 11.5, y - 2, -7, 'ok', x, y]));
        frei.forEach(([x, y]) => graeber.push([x + 11.5, y - 2, -7, 'nein', x, y]));
        graeber.push([473, 775, -7, null, 0, 0]);

        const steine = graeber.map(g => `<use href="#grab" transform="translate(${g[0]} ${g[1]}) rotate(${g[2]})"/>`);
        // am unteren Planrand abgeschnittenes Grab
        steine.push('<svg x="1630" y="970" width="60" height="25"><g transform="translate(-1630 -970)"><use href="#grab" transform="translate(1666 989) rotate(-10)"/><use href="#ok" x="1655" y="991"/></g></svg>');
        const kreise = punkte.map(p => `<circle cx="${p[0]}" cy="${p[1]}" r="4.5"/>`);
        const symbole = graeber.filter(g => g[3]).map(g => `<use href="#${g[3]}" x="${g[4]}" y="${g[5]}"/>`);
        document.getElementById('graeber').innerHTML = steine.concat(kreise, symbole).join('');
    </script>

</body>
</html>
